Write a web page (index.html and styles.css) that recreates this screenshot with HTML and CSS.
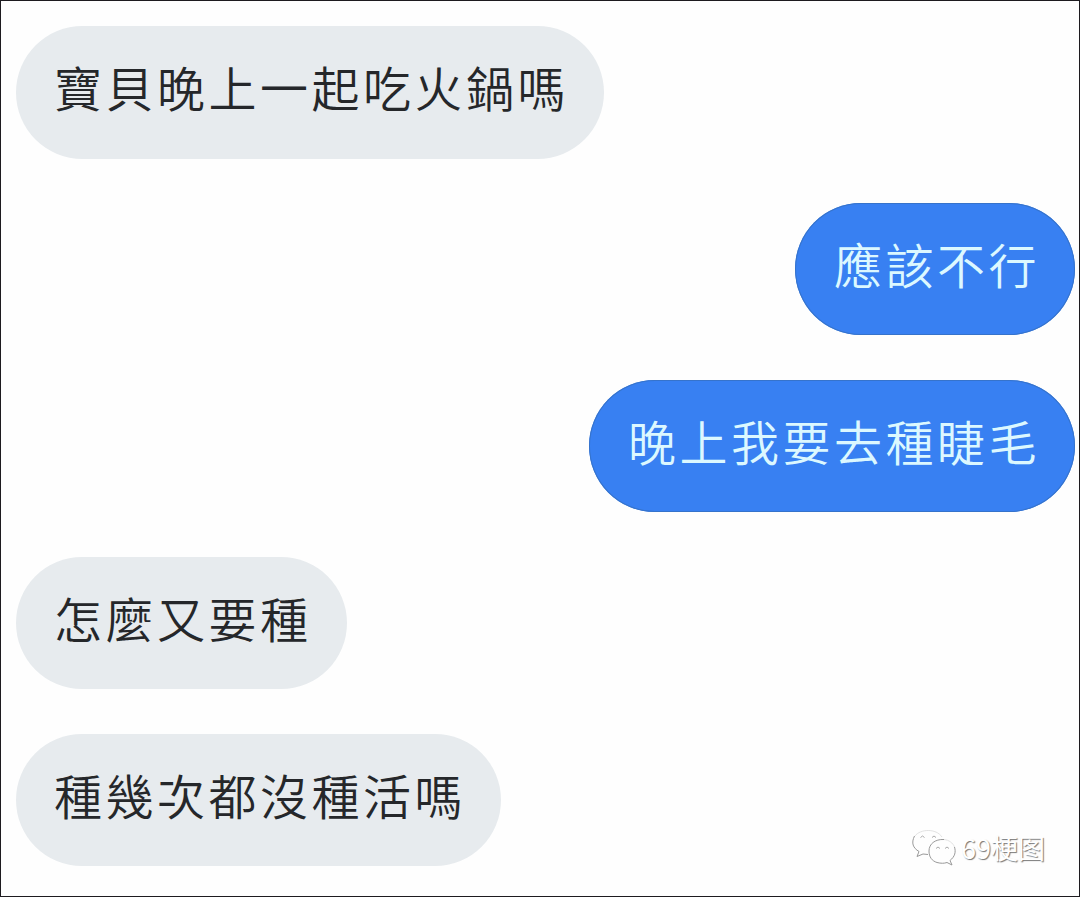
FILE: index.html
```html
<!DOCTYPE html>
<html lang="zh-Hant">
  <head>
    <meta charset="UTF-8" />
    <meta name="viewport" content="width=device-width, initial-scale=1.0" />
    <title>Chat</title>
    <link rel="stylesheet" href="styles.css">
  </head>
  <body>
    <div class="chat">
      <div class="bubble received">寶貝晚上一起吃火鍋嗎</div>
      <div class="bubble sent">應該不行</div>
      <div class="bubble sent">晚上我要去種睫毛</div>
      <div class="bubble received">怎麼又要種</div>
      <div class="bubble received">種幾次都沒種活嗎</div>

      <div class="watermark" lang="zh-Hans">
        <svg class="wechat" viewBox="0 0 46 38" width="46" height="38">
          <!-- back bubble -->
          <path class="faint" d="M3 6 C8 -1 24 -2 30 7" />
          <path d="M2.500 6 C-1 13 1 18 7 21.500 L5 26.500 L11 24 L16 24.500" />
          <path class="eye" d="M8.500 7.500 Q10.500 4.500 12.500 7.500 M20 7.500 Q22 4.500 24 7.500" />
          <!-- front bubble -->
          <path class="faint" d="M32 9.500 C37 10 41 13 42.500 17" />
          <path d="M32 9.500 C23 9 17 14 17 21 C17 27 20 31 25 32.500 C29 33.500 32 33.500 35 32.500 L40 35 L38 30.500 C43 26.500 44 22 42.500 17" />
          <path class="eye" d="M24 18.500 Q26 15.500 28 18.500 M33 18.500 Q35 15.500 37 18.500" />
        </svg>
        <span>69梗图</span>
      </div>
    </div>
  </body>
</html>
```
FILE: styles.css
```css
* {
  box-sizing: border-box;
}

body {
  margin: 0;
  background: #fff;
  font-family: "Noto Sans CJK TC", sans-serif;
}

.chat {
  position: relative;
  display: flex;
  flex-direction: column;
  align-items: flex-start;
  gap: 44.500px;
  height: 897px;
  padding: 25.400px 4px 0 14.500px;
  border: 1px solid #1d1b1f;
  background: #fefefe;
}

.bubble {
  height: 132.300px;
  flex-shrink: 0;
  padding: 0 35px 0 38.500px;
  border-radius: 67px;
  font-size: 48px;
  font-weight: 350;
  line-height: 120px;
  letter-spacing: 3.500px;
  white-space: nowrap;
}

.received {
  background: #e7ebee;
  color: #25272a;
}

.sent {
  align-self: flex-end;
  background: #3880f2;
  color: #dcf8ff;
  box-shadow: inset 0 0 0 1px #3673cb;
}

.watermark {
  position: absolute;
  right: 34px;
  bottom: 28px;
  display: flex;
  align-items: center;
  gap: 3px;
  color: #fff;
  font-family: "Noto Sans CJK SC", sans-serif;
  font-size: 27px;
  line-height: 40px;
  text-shadow: 1px 1px 1px #777;
}

.wechat {
  position: relative;
  top: 1px;
  fill: none;
  stroke: #999;
  stroke-width: 1;
  stroke-linejoin: round;
}

.wechat .faint {
  stroke: #e2e2e2;
}

.wechat .eye {
  stroke: #aaa;
}
```
